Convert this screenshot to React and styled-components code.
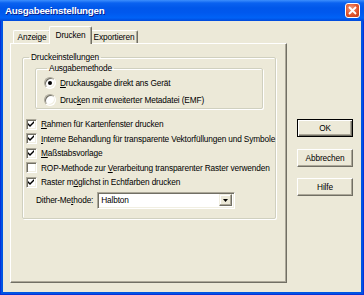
import React from 'react'
import styled, { createGlobalStyle } from 'styled-components'

const GlobalStyle = createGlobalStyle`
  html, body {
    margin: 0;
    padding: 0;
    background: #0055e3;
  }
  body {
    font-family: "Liberation Sans", Arial, sans-serif;
    font-size: 8.3px;
    letter-spacing: -0.15px;
    color: #000;
  }
`;

const Window = styled.div`
  width: 364px;
  height: 295px;
  box-sizing: border-box;
  display: flex;
  flex-direction: column;
  background: #0055e3;
  padding: 0 3px 3px;
  box-shadow: inset 1px 0 #0831d9, inset -1px 0 #0831d9, inset 0 -1px #0831d9;
`;

const TitleBar = styled.div`
  height: 21px;
  margin: 0 -3px;
  padding: 0 5px;
  display: flex;
  align-items: center;
  justify-content: space-between;
  background: linear-gradient(#3d8ffd 0, #0a62f0 3px, #0057ea 8px, #0058ee 60%, #0062f6 85%, #0048da 100%);
`;

const Title = styled.div`
  color: #fff;
  font-weight: bold;
  font-size: 9.8px;
  letter-spacing: -0.25px;
  text-shadow: 1px 1px #0a1e8a;
`;

const CloseButton = styled.div`
  width: 15px;
  height: 15px;
  box-sizing: border-box;
  border: 1px solid #fff;
  border-radius: 3px;
  margin-right: -1px;
  background: radial-gradient(circle at 40% 35%, #f19b7f 0, #e0542c 55%, #c33a14 100%);
  display: flex;
  align-items: center;
  justify-content: center;
`;

const Client = styled.div`
  flex: 1;
  display: flex;
  background: #ece9d8;
  padding: 5px 0 0 7px;
`;

const Tabs = styled.div`
  width: 277px;
  display: flex;
  flex-direction: column;
`;

const TabStrip = styled.div`
  height: 17px;
  display: flex;
  align-items: flex-end;
  padding-left: 3px;
  position: relative;
  z-index: 1;
`;

const Tab = styled.div`
  box-sizing: border-box;
  width: ${p => p.$w + (p.$active ? 4 : 0)}px;
  height: ${p => (p.$active ? 18 : 13)}px;
  margin: 0 ${p => (p.$active ? -2 : 0)}px ${p => (p.$active ? -1 : 0)}px;
  position: relative;
  z-index: ${p => (p.$active ? 2 : 1)};
  border: 1px solid;
  border-color: #fff #716f64 transparent #fff;
  border-bottom: none;
  border-radius: 2px 2px 0 0;
  box-shadow: inset -1px 0 #aca899;
  background: #ece9d8;
  display: flex;
  align-items: center;
  justify-content: center;
  padding-bottom: ${p => (p.$active ? 1 : 0)}px;
`;

const Panel = styled.div`
  height: 240px;
  box-sizing: border-box;
  border: 1px solid;
  border-color: #fff #716f64 #716f64 #fff;
  box-shadow: inset -1px -1px #aca899;
  padding: 7px 10px 0 11px;
`;

const Group = styled.fieldset`
  margin: ${p => p.$margin || '0'};
  padding: ${p => p.$padding || '0'};
  border: 1px solid #d0d0bf;
  border-radius: 2px;
  box-shadow: inset 1px 1px #fff, 1px 1px #fff;
  min-width: 0;
`;

const Legend = styled.legend`
  margin-left: 3px;
  padding: 0 2px;
  line-height: 12px;
`;

const OptionRow = styled.label`
  display: flex;
  align-items: center;
  height: ${p => p.$h}px;
  gap: 4px;
  white-space: nowrap;
`;

const RadioDot = styled.span`
  width: 12px;
  height: 12px;
  box-sizing: border-box;
  border-radius: 50%;
  background: #fff;
  border: 1px solid;
  border-color: #aca899 #fff #fff #aca899;
  box-shadow: inset 1px 1px #716f64, inset -1px -1px #f1efe2;
  display: flex;
  align-items: center;
  justify-content: center;
  &::after {
    content: '';
    width: 4px;
    height: 4px;
    border-radius: 50%;
    background: ${p => (p.$on ? '#000' : 'transparent')};
  }
`;

const CheckBox = styled.span`
  width: 11px;
  height: 11px;
  box-sizing: border-box;
  background: #fff;
  border: 1px solid;
  border-color: #aca899 #fff #fff #aca899;
  box-shadow: inset 1px 1px #716f64, inset -1px -1px #f1efe2;
  display: flex;
  align-items: center;
  justify-content: center;
  flex: none;
`;

const CheckList = styled.div`
  margin-top: 8px;
`;

const Key = styled.span`
  text-decoration: underline;
`;

const DitherRow = styled.div`
  display: flex;
  align-items: center;
  margin-top: 2px;
  padding-left: 10px;
  gap: 4px;
`;

const Combo = styled.div`
  width: 138px;
  height: 17px;
  box-sizing: border-box;
  background: #fff;
  border: 1px solid;
  border-color: #aca899 #fff #fff #aca899;
  box-shadow: inset 1px 1px #716f64, inset -1px -1px #f1efe2;
  display: flex;
  align-items: center;
  justify-content: space-between;
  padding: 2px 2px 2px 3px;
`;

const DropButton = styled.div`
  width: 13px;
  height: 12px;
  box-sizing: border-box;
  background: #ece9d8;
  border: 1px solid;
  border-color: #f1efe2 #716f64 #716f64 #f1efe2;
  box-shadow: inset -1px -1px #aca899, inset 1px 1px #fff;
  display: flex;
  align-items: center;
  justify-content: center;
`;

const ButtonColumn = styled.div`
  display: flex;
  flex-direction: column;
  gap: 11.5px;
  margin-left: 10px;
  padding-top: 93px;
`;

const Button = styled.div`
  width: 56px;
  height: 18px;
  box-sizing: border-box;
  display: flex;
  align-items: center;
  justify-content: center;
  background: #ece9d8;
  border: 1px solid;
  border-color: ${p => (p.$default ? '#000' : '#fff #716f64 #716f64 #fff')};
  box-shadow: ${p =>
    p.$default
      ? 'inset 1px 1px #fff, inset -1px -1px #716f64, inset -2px -2px #aca899'
      : 'inset -1px -1px #aca899'};
`;

const Check = () => (
  <svg width="7" height="7" viewBox="0 0 7 7">
    <path d="M0 2 L2 4 L6 0 L6 2 L2 6 L0 4 Z" fill="#000" />
  </svg>
);

const options = [
  { key: 'R', rest: 'ahmen für Kartenfenster drucken', on: true },
  { key: 'I', rest: 'nterne Behandlung für transparente Vektorfüllungen und Symbole', on: true },
  { key: 'M', rest: 'aßstabsvorlage', on: true },
  { pre: 'ROP-Methode zur ', key: 'V', rest: 'erarbeitung transparenter Raster verwenden', on: false },
  { pre: 'Raster m', key: 'ö', rest: 'glichst in Echtfarben drucken', on: true },
];

const App = () => {
  return (
    <Window>
      <GlobalStyle />
      <TitleBar>
        <Title>Ausgabeeinstellungen</Title>
        <CloseButton>
          <svg width="9" height="9" viewBox="0 0 9 9">
            <path d="M1 1 L8 8 M8 1 L1 8" stroke="#fff" strokeWidth="1.8" />
          </svg>
        </CloseButton>
      </TitleBar>
      <Client>
        <Tabs>
          <TabStrip>
            <Tab $w={38}>Anzeige</Tab>
            <Tab $w={39} $active>Drucken</Tab>
            <Tab $w={48}>Exportieren</Tab>
          </TabStrip>
          <Panel>
            <Group $padding="0 0 9px 3px">
              <Legend>Druckeinstellungen</Legend>
              <Group $margin="-1px 12px 0 9px" $padding="0 0 0 8px">
                <Legend>Ausgabemethode</Legend>
                <OptionRow $h={17}>
                  <RadioDot $on />
                  <span><Key>D</Key>ruckausgabe direkt ans Gerät</span>
                </OptionRow>
                <OptionRow $h={17}>
                  <RadioDot />
                  <span>Druc<Key>k</Key>en mit erweiterter Metadatei (EMF)</span>
                </OptionRow>
              </Group>
              <CheckList>
                {options.map(o => (
                  <OptionRow key={o.rest} $h={14.5}>
                    <CheckBox>{o.on && <Check />}</CheckBox>
                    <span>{o.pre}<Key>{o.key}</Key>{o.rest}</span>
                  </OptionRow>
                ))}
              </CheckList>
              <DitherRow>
                <span>Dither-Me<Key>t</Key>hode:</span>
                <Combo>
                  <span>Halbton</span>
                  <DropButton>
                    <svg width="5" height="3" viewBox="0 0 5 3">
                      <path d="M0 0 H5 L2.5 3 Z" fill="#000" />
                    </svg>
                  </DropButton>
                </Combo>
              </DitherRow>
            </Group>
          </Panel>
        </Tabs>
        <ButtonColumn>
          <Button $default>OK</Button>
          <Button>Abbrechen</Button>
          <Button>Hilfe</Button>
        </ButtonColumn>
      </Client>
    </Window>
  )
}

export default App
